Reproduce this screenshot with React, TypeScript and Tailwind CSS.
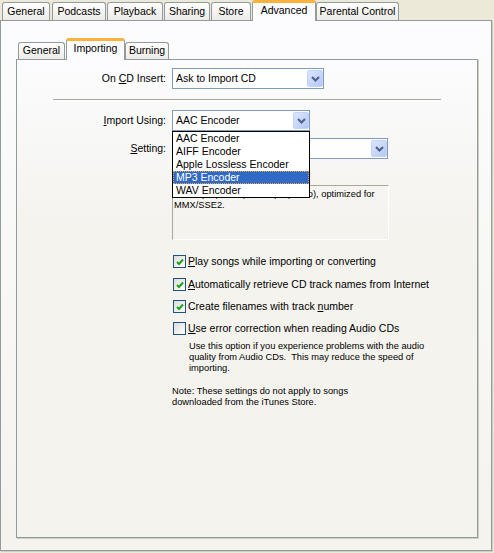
const font = "font-['Liberation_Sans',Arial,sans-serif]";

function Chevron() {
  return (
    <svg width="9" height="6" viewBox="0 0 9 6">
      <path d="M1 1 L4.5 4.5 L8 1" fill="none" stroke="#4D6185" strokeWidth="2" />
    </svg>
  );
}

function Combo({ value, className = "", children }: { value: string; className?: string; children?: React.ReactNode }) {
  return (
    <div className={`relative h-[21px] border border-[#7F9DB9] bg-white flex items-center justify-between ${className}`}>
      <span className="pl-[3px] text-[10.5px] leading-none">{value}</span>
      <div className="w-[16px] h-[17px] rounded-[2px] border border-[#C3D3FD] bg-[linear-gradient(135deg,#DCE6FE,#B4C8F6)] flex items-center justify-center">
        <Chevron />
      </div>
      {children}
    </div>
  );
}

function Check({ checked }: { checked?: boolean }) {
  return (
    <div className="w-[13px] h-[13px] shrink-0 border border-[#1C5180] bg-[linear-gradient(135deg,#DCDCD7,#FFFFFF)] flex items-center justify-center">
      {checked && (
        <svg width="8" height="8" viewBox="0 0 8 8">
          <path d="M1 4 L3 6 L7 1.5" fill="none" stroke="#21A121" strokeWidth="2" />
        </svg>
      )}
    </div>
  );
}

function Tab({ label, className = "", selected }: { label: React.ReactNode; className?: string; selected?: boolean }) {
  if (selected) {
    return (
      <div
        className={`h-full relative z-10 flex items-center justify-center pb-[3px] rounded-t-[3px] border-x border-[#919B9C] border-t-[3px] border-t-[#F9B23C] bg-[#FCFCFE] text-[10.5px] ${className}`}
      >
        {label}
      </div>
    );
  }
  return (
    <div
      className={`mb-px flex items-center justify-center rounded-t-[3px] border border-b-0 border-[#919B9C] bg-[linear-gradient(to_bottom,#FFFFFF,#ECEBE6)] text-[10.5px] ${className}`}
    >
      {label}
    </div>
  );
}

const encoders = ["AAC Encoder", "AIFF Encoder", "Apple Lossless Encoder", "MP3 Encoder", "WAV Encoder"];

export default function App() {
  return (
    <div className={`w-[494px] h-[553px] bg-[#ECE9D8] flex flex-col text-black ${font}`}>
      {/* top tabs */}
      <div className="h-[21px] -mb-px flex items-end relative z-10">
        <Tab label="General" className="ml-[2px] w-[48px] h-[18px]" />
        <Tab label="Podcasts" className="ml-[2px] w-[54px] h-[18px]" />
        <Tab label="Playback" className="ml-px w-[56px] h-[18px]" />
        <Tab label="Sharing" className="ml-px w-[46px] h-[18px]" />
        <Tab label="Store" className="ml-px w-[40px] h-[18px]" />
        <Tab label="Advanced" className="ml-px w-[64px]" selected />
        <Tab label="Parental Control" className="w-[83px] h-[18px]" />
      </div>

      {/* outer panel */}
      <div className="w-[492px] h-[531px] border border-[#919B9C] shadow-[1px_1px_0_#D0CEBF] bg-[linear-gradient(to_bottom,#FCFCFE,#F4F3EE)] pl-[15px] pt-[17px] flex flex-col">
        <div className="h-[22px] -mb-px flex items-end relative z-10">
          <Tab label="General" className="ml-[2px] w-[47px] h-[17px]" />
          <Tab label="Importing" className="ml-px w-[59px]" selected />
          <Tab label="Burning" className="w-[44px] h-[17px]" />
        </div>

        {/* inner panel */}
        <div className="w-[462px] h-[479px] border border-[#919B9C] shadow-[1px_1px_0_#D0CEBF] bg-[linear-gradient(to_bottom,#FCFCFE,#F4F3EE_35%)] flex flex-col text-[10.5px]">
          <div className="mt-[8px] flex items-center">
            <div className="w-[149px] text-right">
              On <u>C</u>D Insert:
            </div>
            <Combo value="Ask to Import CD" className="ml-[6px] w-[152px]" />
          </div>

          <div className="mt-[10px] ml-[36px] w-[388px] border-t border-[#ACA899] border-b border-b-white" />

          <div className="mt-[9px] flex items-center relative z-20">
            <div className="w-[149px] text-right">
              <u>I</u>mport Using:
            </div>
            <Combo value="AAC Encoder" className="ml-[6px] w-[138px]">
              <div className="absolute left-[-1px] top-[20px] w-[138px] border border-black bg-white">
                {encoders.map((e) => (
                  <div
                    key={e}
                    className={
                      e === "MP3 Encoder"
                        ? "h-[13px] pl-[2px] flex items-center bg-[#316AC5] text-white border border-dotted border-[#E8A848]"
                        : "h-[13px] pl-[3px] flex items-center"
                    }
                  >
                    {e}
                  </div>
                ))}
              </div>
            </Combo>
          </div>

          <div className="mt-[7px] flex items-center">
            <div className="w-[149px] text-right">
              <u>S</u>etting:
            </div>
            <Combo value="High Quality (128 kbps)" className="ml-[6px] w-[216px]" />
          </div>

          <div className="mt-[26px] ml-[155px] w-[217px] h-[55px] border border-t-[#ACA899] border-l-[#ACA899] border-r-white border-b-white pl-px pt-[3px] text-[9.3px] leading-[11px]">
            128 kbps (stereo), 64 kbps (mono), optimized for
            <br />
            MMX/SSE2.
          </div>

          <div className="mt-[15px] ml-[156px] h-[13px] flex items-center gap-[2px]">
            <Check checked />
            <span>
              <u>P</u>lay songs while importing or converting
            </span>
          </div>
          <div className="mt-[10px] ml-[156px] h-[13px] flex items-center gap-[2px]">
            <Check checked />
            <span>
              <u>A</u>utomatically retrieve CD track names from Internet
            </span>
          </div>
          <div className="mt-[9px] ml-[156px] h-[13px] flex items-center gap-[2px]">
            <Check checked />
            <span>
              Create filenames with track <u>n</u>umber
            </span>
          </div>
          <div className="mt-[9px] ml-[156px] h-[13px] flex items-center gap-[2px]">
            <Check />
            <span>
              <u>U</u>se error correction when reading Audio CDs
            </span>
          </div>

          <div className="mt-[6px] ml-[172px] text-[9.3px] leading-[11px]">
            Use this option if you experience problems with the audio
            <br />
            quality from Audio CDs.&nbsp; This may reduce the speed of
            <br />
            importing.
          </div>

          <div className="mt-[12px] ml-[155px] text-[9.3px] leading-[10.5px]">
            Note: These settings do not apply to songs
            <br />
            downloaded from the iTunes Store.
          </div>
        </div>
      </div>
    </div>
  );
}
